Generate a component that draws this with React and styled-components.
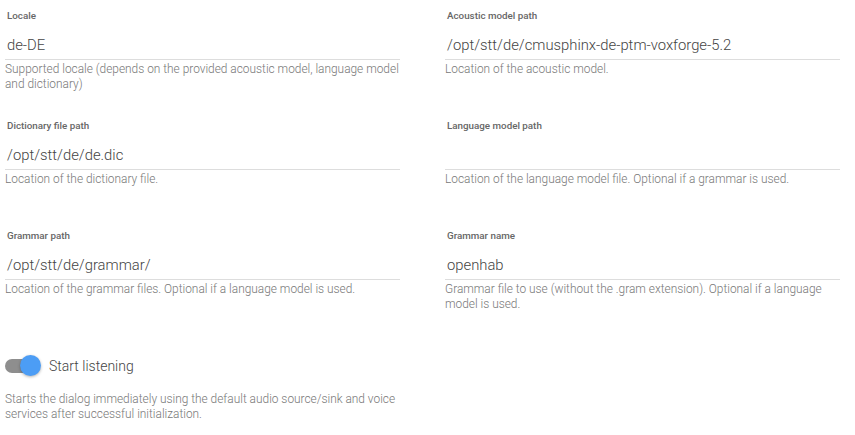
import React from 'react'
import styled, { createGlobalStyle } from 'styled-components'

const GlobalStyle = createGlobalStyle`
  body {
    margin: 0;
    background: #fff;
    font-family: Roboto, "Liberation Sans", sans-serif;
  }
`

const Page = styled.div`
  padding: 0 15px 0 5px;
`

const Grid = styled.div`
  display: grid;
  grid-template-columns: 395px 395px;
  column-gap: 45px;
`

const Field = styled.div`
  height: 110px;
  padding-top: 10px;
  box-sizing: border-box;
`

const Label = styled.div`
  font-size: 9.8px;
  font-weight: 500;
  line-height: 12px;
  color: #666;
  padding-left: 2px;
`

const Value = styled.div`
  margin-top: 13px;
  height: 20px;
  padding: 0 0 4px 2px;
  font-size: 14.8px;
  font-weight: 300;
  line-height: 20px;
  color: #444;
  border-bottom: 1px solid #ddd;
`

const Hint = styled.div`
  margin-top: 2px;
  font-size: 11.9px;
  font-weight: 300;
  line-height: 15px;
  color: #777;
`

const ToggleRow = styled.div`
  display: flex;
  align-items: center;
  gap: 14px;
  margin-top: 24px;
  height: 24px;
`

const Track = styled.div`
  position: relative;
  width: 30px;
  height: 14px;
  border-radius: 7px;
  background: #8e8e8e;
`

const Knob = styled.div`
  position: absolute;
  right: -6px;
  top: -4px;
  width: 21px;
  height: 21px;
  border-radius: 50%;
  background: #4c9df5;
  box-shadow: 0 1px 3px rgba(0, 0, 0, 0.3);
`

const ToggleLabel = styled.span`
  font-size: 14px;
  font-weight: 300;
  color: #444;
`

const ToggleHint = styled(Hint)`
  margin-top: 14px;
  width: 395px;
`

const fields = [
  ['Locale', 'de-DE', 'Supported locale (depends on the provided acoustic model, language model and dictionary)'],
  ['Acoustic model path', '/opt/stt/de/cmusphinx-de-ptm-voxforge-5.2', 'Location of the acoustic model.'],
  ['Dictionary file path', '/opt/stt/de/de.dic', 'Location of the dictionary file.'],
  ['Language model path', '', 'Location of the language model file. Optional if a grammar is used.'],
  ['Grammar path', '/opt/stt/de/grammar/', 'Location of the grammar files. Optional if a language model is used.'],
  ['Grammar name', 'openhab', 'Grammar file to use (without the .gram extension). Optional if a language model is used.']
]

export default function App () {
  return (
    <Page>
      <GlobalStyle />
      <Grid>
        {fields.map(([label, value, hint]) => (
          <Field key={label}>
            <Label>{label}</Label>
            <Value>{value}</Value>
            <Hint>{hint}</Hint>
          </Field>
        ))}
      </Grid>
      <ToggleRow>
        <Track><Knob /></Track>
        <ToggleLabel>Start listening</ToggleLabel>
      </ToggleRow>
      <ToggleHint>
        Starts the dialog immediately using the default audio source/sink and voice services after successful initialization.
      </ToggleHint>
    </Page>
  )
}
